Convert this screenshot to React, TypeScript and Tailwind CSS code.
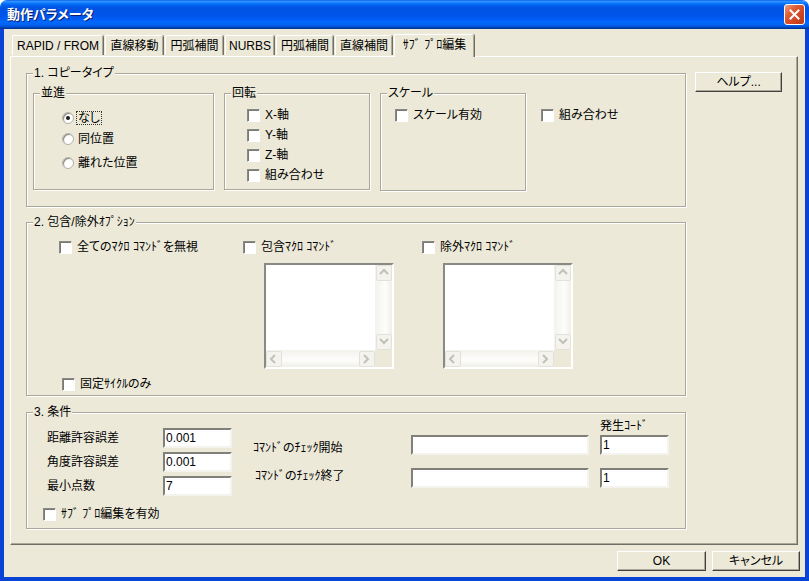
import React from 'react';

// Windows XP style "動作パラメータ" dialog

const CheckBox = ({ label, className = '' }: { label: string; className?: string }) => (
  <div className={`flex h-[14px] items-center ${className}`}>
    <span className="h-[13px] w-[13px] shrink-0 border border-b-white border-l-[#8a8a84] border-r-white border-t-[#8a8a84] bg-white shadow-[inset_1px_1px_0_#7a7a74]" />
    <span className="ml-[5px] whitespace-nowrap leading-[14px]">{label}</span>
  </div>
);

const Radio = ({ label, checked = false, focused = false }: { label: string; checked?: boolean; focused?: boolean }) => (
  <div className="flex h-[14px] items-center">
    <span className="flex h-[12px] w-[12px] shrink-0 items-center justify-center rounded-full border border-[#b4b2a8] bg-[radial-gradient(circle_at_65%_65%,#ffffff_40%,#e4e3dc_100%)] shadow-[inset_1px_1px_0_#8f8d85]">
      {checked && <span className="h-[4px] w-[4px] rounded-full bg-[#1a1a1a]" />}
    </span>
    <span
      className={`ml-[3px] whitespace-nowrap px-[1px] leading-[12px] ${
        focused ? 'outline outline-1 outline-dotted outline-[#333]' : ''
      }`}
    >
      {label}
    </span>
  </div>
);

const TextBox = ({ value = '', className = '' }: { value?: string; className?: string }) => (
  <div
    className={`h-[20px] shrink-0 border-2 border-b-[#f4f3ee] border-l-[#808078] border-r-[#f4f3ee] border-t-[#808078] bg-white pl-[1px] leading-[16px] ${className}`}
  >
    {value}
  </div>
);

const Chevron = ({ dir }: { dir: 'up' | 'down' | 'left' | 'right' }) => {
  const pts = {
    up: '1,6 5,2 9,6',
    down: '1,2 5,6 9,2',
    left: '6,1 2,5 6,9',
    right: '2,1 6,5 2,9',
  }[dir];
  return (
    <svg width="10" height="10" viewBox="0 0 10 10" className="block">
      <polyline points={pts} fill="none" stroke="#c2c1b8" strokeWidth="2" />
    </svg>
  );
};

const ScrollBtn = ({ dir }: { dir: 'up' | 'down' | 'left' | 'right' }) => (
  <div className="flex h-[16px] w-[16px] shrink-0 items-center justify-center rounded-[2px] border border-[#e3e2da] bg-[#f4f3ee]">
    <Chevron dir={dir} />
  </div>
);

const ListBox = ({ className = '' }: { className?: string }) => (
  <div
    className={`flex h-[106px] w-[130px] flex-col border-2 border-b-white border-l-[#8a8a84] border-r-white border-t-[#8a8a84] ${className}`}
  >
    <div className="flex flex-1">
      <div className="flex-1 bg-white" />
      <div className="flex w-[17px] flex-col items-center justify-between bg-[linear-gradient(90deg,#f3f2ec,#fdfdfb_60%,#f0efe8)] px-[0.5px]">
        <ScrollBtn dir="up" />
        <ScrollBtn dir="down" />
      </div>
    </div>
    <div className="flex h-[17px]">
      <div className="flex flex-1 items-center justify-between bg-[linear-gradient(180deg,#f3f2ec,#fdfdfb_60%,#f0efe8)]">
        <ScrollBtn dir="left" />
        <ScrollBtn dir="right" />
      </div>
      <div className="w-[17px] bg-[#ECE9D8]" />
    </div>
  </div>
);

const GroupBox = ({
  title,
  className = '',
  children,
}: {
  title: string;
  className?: string;
  children?: React.ReactNode;
}) => (
  <div className={`relative border border-[#aca899] shadow-[inset_1px_1px_0_#ffffff,1px_1px_0_#ffffff] ${className}`}>
    <span className="absolute -top-[8px] left-[6px] whitespace-nowrap bg-[#ECE9D8] px-[1px] leading-[14px]">{title}</span>
    {children}
  </div>
);

const Button = ({ label, className = '' }: { label: string; className?: string }) => (
  <div
    className={`flex h-[20px] items-center justify-center border border-b-[#404040] border-l-white border-r-[#404040] border-t-white bg-[#ECE9D8] shadow-[inset_-1px_-1px_0_#aca899] ${className}`}
  >
    {label}
  </div>
);

const tabs = [
  { label: 'RAPID / FROM', w: 'w-[91px]' },
  { label: '直線移動', w: 'w-[58px]' },
  { label: '円弧補間', w: 'w-[58px]' },
  { label: 'NURBS', w: 'w-[49px]' },
  { label: '円弧補間', w: 'w-[57px]' },
  { label: '直線補間', w: 'w-[57px]' },
];

export default function App() {
  return (
    <div className="flex h-[581px] w-[809px] flex-col font-['Liberation_Sans','Noto_Sans_CJK_JP',sans-serif] text-[12px] text-black [font-feature-settings:'palt']">
      {/* Title bar */}
      <div className="flex h-[29px] shrink-0 items-center justify-between rounded-t-[7px] bg-[linear-gradient(180deg,#0058EE_0%,#3593FF_4%,#288EFF_7%,#127DFF_10%,#036FFC_14%,#0262EE_18%,#0057E5_24%,#0054E3_30%,#0055EB_56%,#005BF5_66%,#026AFE_76%,#0062EF_86%,#0052D6_92%,#0040AB_96%,#003092_100%)] pl-[7px] pr-[4px]">
        <span className="text-[13px] font-bold leading-[16px] text-white [text-shadow:1px_1px_0_#0a1e6e]">動作パラメータ</span>
        <div className="flex h-[21px] w-[21px] items-center justify-center rounded-[3px] border border-white bg-[linear-gradient(135deg,#f0a080_0%,#e05a32_35%,#cc4420_70%,#b83a18_100%)]">
          <svg width="11" height="11" viewBox="0 0 11 11">
            <path d="M1.5 1.5 L9.5 9.5 M9.5 1.5 L1.5 9.5" stroke="#ffffff" strokeWidth="2" strokeLinecap="square" />
          </svg>
        </div>
      </div>

      {/* Body */}
      <div className="flex flex-1 flex-col border-x-4 border-b-4 border-[#0843D6] bg-[#ECE9D8] pl-[6px] pr-[5px] pt-[4px]">
        {/* Tabs */}
        <div className="flex h-[23px] items-end gap-[2px] pl-[2px]">
          {tabs.map((t, i) => (
            <div
              key={i}
              className={`mb-[1px] flex h-[20px] ${t.w} items-center justify-center whitespace-nowrap rounded-t-[2px] border-l border-t border-l-white border-t-white leading-[14px] shadow-[inset_-1px_0_0_#aca899,1px_0_0_#716f64]`}
            >
              {t.label}
            </div>
          ))}
          <div className="relative z-10 -mb-[1px] flex h-[23px] w-[80px] items-start justify-center whitespace-nowrap rounded-t-[2px] border-l border-t border-l-white border-t-white bg-[#ECE9D8] pt-[3px] leading-[14px] shadow-[inset_-1px_0_0_#aca899,1px_0_0_#716f64]">
            ｻﾌﾞ ﾌﾟﾛ編集
          </div>
        </div>

        {/* Tab panel */}
        <div className="flex h-[489px] w-[788px] border border-b-[#716f64] border-l-white border-r-[#716f64] border-t-white pl-[15px] pt-[16px] shadow-[inset_-1px_-1px_0_#aca899]">
          <div className="flex w-[660px] flex-col">
            {/* 1. コピータイプ */}
            <GroupBox title="1. コピータイプ" className="h-[134px]">
              <div className="flex pl-[6px] pt-[19px]">
                <GroupBox title="並進" className="h-[97px] w-[181px]">
                  <div className="flex flex-col pl-[28px] pt-[17px]">
                    <Radio label="なし" checked focused />
                    <div className="mt-[7px]">
                      <Radio label="同位置" />
                    </div>
                    <div className="mt-[10px]">
                      <Radio label="離れた位置" />
                    </div>
                  </div>
                </GroupBox>
                <GroupBox title="回転" className="ml-[10px] h-[97px] w-[146px]">
                  <div className="flex flex-col gap-[6px] pl-[22px] pt-[14px]">
                    <CheckBox label="X-軸" />
                    <CheckBox label="Y-軸" />
                    <CheckBox label="Z-軸" />
                    <CheckBox label="組み合わせ" />
                  </div>
                </GroupBox>
                <GroupBox title="スケール" className="ml-[10px] h-[98px] w-[146px]">
                  <div className="flex flex-col pl-[14px] pt-[14px]">
                    <CheckBox label="スケール有効" />
                  </div>
                </GroupBox>
                <CheckBox label="組み合わせ" className="ml-[15px] mt-[15px]" />
              </div>
            </GroupBox>

            {/* 2. 包含/除外オプション */}
            <GroupBox title="2. 包含/除外ｵﾌﾟｼｮﾝ" className="mt-[15px] h-[174px]">
              <div className="flex flex-col pl-[32px] pt-[17px]">
                <div className="flex">
                  <div className="w-[184px]">
                    <CheckBox label="全てのﾏｸﾛ ｺﾏﾝﾄﾞを無視" />
                  </div>
                  <div className="flex w-[179px] flex-col">
                    <CheckBox label="包含ﾏｸﾛ ｺﾏﾝﾄﾞ" />
                    <ListBox className="ml-[21px] mt-[9px]" />
                  </div>
                  <div className="flex flex-col">
                    <CheckBox label="除外ﾏｸﾛ ｺﾏﾝﾄﾞ" />
                    <ListBox className="ml-[21px] mt-[9px]" />
                  </div>
                </div>
                <CheckBox label="固定ｻｲｸﾙのみ" className="ml-[3px] mt-[8px]" />
              </div>
            </GroupBox>

            {/* 3. 条件 */}
            <GroupBox title="3. 条件" className="mt-[16px] h-[117px]">
              <div className="flex">
                <div className="flex flex-col gap-[4px] pl-[20px] pt-[15px]">
                  <div className="flex items-center">
                    <span className="w-[116px] leading-[14px]">距離許容誤差</span>
                    <TextBox value="0.001" className="w-[69px]" />
                  </div>
                  <div className="flex items-center">
                    <span className="w-[116px] leading-[14px]">角度許容誤差</span>
                    <TextBox value="0.001" className="w-[69px]" />
                  </div>
                  <div className="flex items-center">
                    <span className="w-[116px] leading-[14px]">最小点数</span>
                    <TextBox value="7" className="w-[69px]" />
                  </div>
                </div>
                <div className="ml-[21px] flex w-[158px] flex-col pt-[28px]">
                  <span className="leading-[14px]">ｺﾏﾝﾄﾞのﾁｪｯｸ開始</span>
                  <span className="mt-[14px] pl-[2px] leading-[14px]">ｺﾏﾝﾄﾞのﾁｪｯｸ終了</span>
                </div>
                <div className="flex flex-col gap-[13px] pt-[22px]">
                  <TextBox className="w-[178px]" />
                  <TextBox className="w-[178px]" />
                </div>
                <div className="ml-[11px] flex flex-col pt-[6px]">
                  <span className="leading-[14px]">発生ｺｰﾄﾞ</span>
                  <TextBox value="1" className="mt-[2px] w-[69px]" />
                  <TextBox value="1" className="mt-[13px] w-[69px]" />
                </div>
              </div>
              <CheckBox label="ｻﾌﾞ ﾌﾟﾛ編集を有効" className="ml-[16px] mt-[11px]" />
            </GroupBox>
          </div>

          <Button label="ヘルプ..." className="-mt-[1px] ml-[9px] h-[20px] w-[87px]" />
        </div>

        {/* Dialog buttons */}
        <div className="mt-[6px] flex justify-end gap-[6px]">
          <Button label="OK" className="w-[89px]" />
          <Button label="キャンセル" className="w-[88px]" />
        </div>
      </div>
    </div>
  );
}
